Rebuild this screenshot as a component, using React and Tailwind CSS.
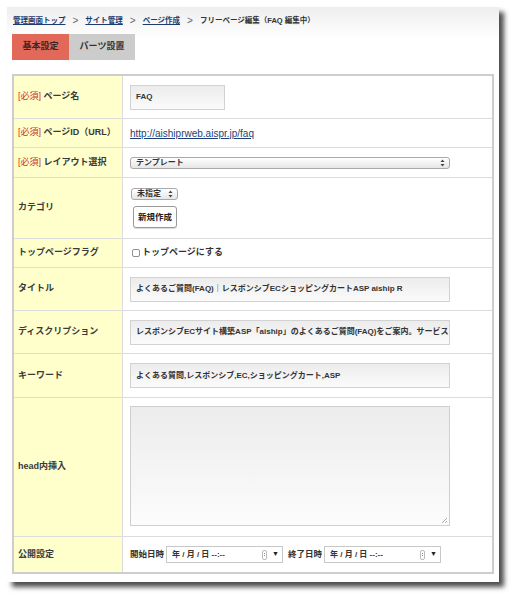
import React from "react";

const jp = { fontFamily: '"Liberation Sans", "Noto Sans CJK JP", sans-serif' };

function Label({ req, children }) {
  return (
    <span className="text-[9px] font-bold text-[#3a3a3a]">
      {req && <span className="text-[#c8321e] font-normal">[必須] </span>}
      {children}
    </span>
  );
}

function Row({ h, label, children, last, tdClass = "" }) {
  return (
    <div className={`flex ${h} ${last ? "" : "border-b border-[#dcdcdc]"}`}>
      <div className="w-[109px] shrink-0 bg-[#ffffcc] border-r border-[#dcdcdc] flex items-center pl-[4px]">
        {label}
      </div>
      <div className={`flex-1 min-w-0 pl-[7px] ${tdClass}`}>{children}</div>
    </div>
  );
}

function TextBox({ w = "w-[320px]", value }) {
  return (
    <div
      className={`${w} h-[25px] border border-[#d2d2d2] bg-[linear-gradient(to_bottom,#ececec,#fbfbfb)] flex items-center pl-[5px] overflow-hidden whitespace-nowrap text-[8px] font-bold text-[#333]`}
    >
      {value}
    </div>
  );
}

function UpDown() {
  return (
    <svg width="5" height="8" viewBox="0 0 5 8" className="shrink-0">
      <path d="M2.5 0.5 L4.5 3 H0.5 Z" fill="#444" />
      <path d="M2.5 7.5 L4.5 5 H0.5 Z" fill="#444" />
    </svg>
  );
}

function Select({ w, value }) {
  return (
    <div
      className={`${w} h-[12px] rounded-[3px] border border-[#a9a9a9] bg-[linear-gradient(to_bottom,#ffffff,#e6e6e6)] flex items-center justify-between pl-[5px] pr-[4px] text-[8px] font-bold text-[#333] leading-none`}
    >
      <span>{value}</span>
      <UpDown />
    </div>
  );
}

function DateBox() {
  return (
    <div className="w-[117px] h-[17px] border border-[#c8c8c8] bg-white flex items-center pl-[5px] pr-[3px] text-[8px] font-bold text-[#333]">
      <span className="flex-1 whitespace-nowrap">年 / 月 / 日 --:--</span>
      <span className="w-[5px] h-[10px] rounded-[2px] border border-[#bbb] flex flex-col items-center justify-center gap-[1px] mr-[5px]">
        <span className="w-[1px] h-[1px] bg-[#888]" />
        <span className="w-[1px] h-[1px] bg-[#888]" />
      </span>
      <span className="text-[7px] text-[#222]">▼</span>
    </div>
  );
}

export default function App() {
  return (
    <div className="w-[520px] h-[602px] bg-white pt-[7px] pl-[7px]" style={jp}>
      <div className="w-[492px] h-[575px] bg-[linear-gradient(to_bottom,#eeeeee,#ffffff_32px)] shadow-[5px_5px_5px_rgba(0,0,0,0.7)] pt-[7px] pl-[5px]">
        {/* breadcrumb */}
        <div className="flex items-center gap-[7px] h-[13px] pl-[1px] text-[7.5px] font-bold text-[#333]">
          <a className="underline text-[#1e3b6e]">管理画面トップ</a>
          <span className="text-[10px] font-normal text-[#666]">&gt;</span>
          <a className="underline text-[#1e3b6e]">サイト管理</a>
          <span className="text-[10px] font-normal text-[#666]">&gt;</span>
          <a className="underline text-[#1e3b6e]">ページ作成</a>
          <span className="text-[10px] font-normal text-[#666]">&gt;</span>
          <span>フリーページ編集（FAQ 編集中）</span>
        </div>

        {/* tabs */}
        <div className="flex mt-[7px] h-[26px]">
          <div className="w-[57px] bg-[#e2685a] flex items-center justify-center text-[9px] font-bold text-[#3c2622]">
            基本設定
          </div>
          <div className="w-[66px] bg-[#cccccc] flex items-center justify-center text-[9px] font-bold text-[#333]">
            パーツ設置
          </div>
        </div>

        {/* form table */}
        <div className="mt-[14px] w-[482px] border-2 border-[#cdcdcd] bg-white">
          <Row h="h-[43px]" label={<Label req>ページ名</Label>} tdClass="flex items-center">
            <TextBox w="w-[95px]" value="FAQ" />
          </Row>
          <Row h="h-[29px]" label={<Label req>ページID（URL）</Label>} tdClass="flex items-center">
            <a className="underline text-[10px] text-[#1d3f78]" style={{ fontFamily: '"Liberation Sans", sans-serif' }}>
              http://aishiprweb.aispr.jp/faq
            </a>
          </Row>
          <Row h="h-[30px]" label={<Label req>レイアウト選択</Label>} tdClass="flex items-center">
            <Select w="w-[320px]" value="テンプレート" />
          </Row>
          <Row h="h-[61px]" label={<Label>カテゴリ</Label>} tdClass="pt-[10px]">
            <div className="ml-[1px]">
              <Select w="w-[47px]" value="未指定" />
            </div>
            <div className="ml-[3px] mt-[6px] w-[44px] h-[22px] rounded-[3px] border border-[#9a9a9a] bg-white shadow-[0_1px_1px_rgba(0,0,0,0.15)] flex items-center justify-center text-[8.5px] font-bold text-[#222]">
              新規作成
            </div>
          </Row>
          <Row h="h-[29px]" label={<Label>トップページフラグ</Label>} tdClass="flex items-center">
            <span className="ml-[2px] w-[8px] h-[8px] rounded-[2px] border border-[#8f8f8f] bg-white" />
            <span className="ml-[2px] text-[9px] font-bold text-[#333]">トップページにする</span>
          </Row>
          <Row h="h-[43px]" label={<Label>タイトル</Label>} tdClass="flex items-center">
            <TextBox value="よくあるご質問(FAQ)｜レスポンシブECショッピングカートASP aiship R" />
          </Row>
          <Row h="h-[43px]" label={<Label>ディスクリプション</Label>} tdClass="flex items-center">
            <TextBox value="レスポンシブECサイト構築ASP「aiship」のよくあるご質問(FAQ)をご案内。サービス" />
          </Row>
          <Row h="h-[44px]" label={<Label>キーワード</Label>} tdClass="flex items-center">
            <TextBox value="よくある質問,レスポンシブ,EC,ショッピングカート,ASP" />
          </Row>
          <Row h="h-[139px]" label={<Label>head内挿入</Label>} tdClass="pt-[8px]">
            <div className="relative w-[320px] h-[120px] border border-[#cfcfcf] bg-[linear-gradient(to_bottom,#ececec,#fcfcfc)]">
              <svg width="7" height="7" viewBox="0 0 7 7" className="absolute right-[1px] bottom-[1px]">
                <path d="M6 1 L1 6 M6 4 L4 6" stroke="#999" strokeWidth="0.8" />
              </svg>
            </div>
          </Row>
          <Row h="h-[35px]" label={<Label>公開設定</Label>} tdClass="flex items-center" last>
            <span className="text-[8.5px] font-bold text-[#333] mr-[2px]">開始日時</span>
            <DateBox />
            <span className="ml-[5px] text-[8.5px] font-bold text-[#333] mr-[2px]">終了日時</span>
            <DateBox />
          </Row>
        </div>
      </div>
    </div>
  );
}
